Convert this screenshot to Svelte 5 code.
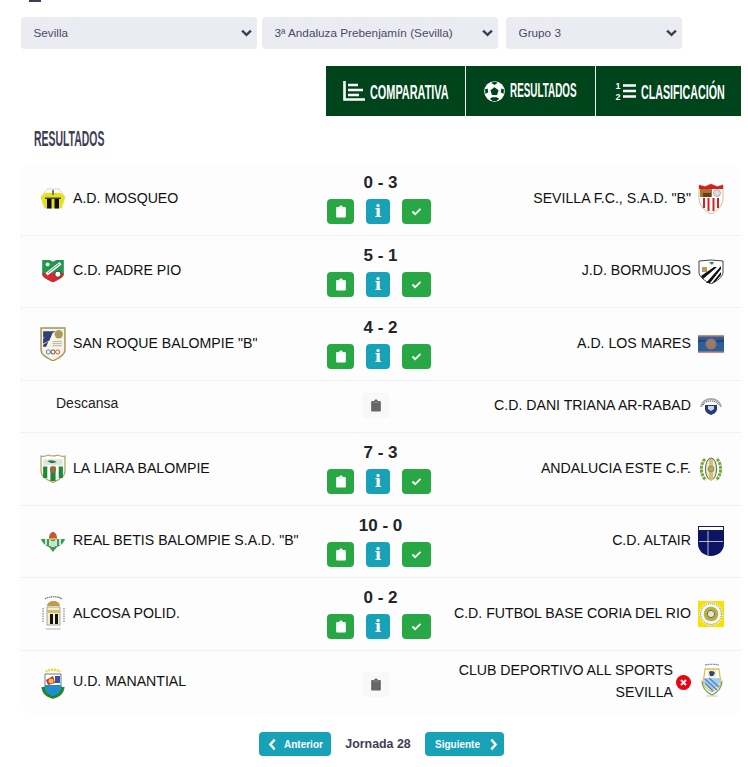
<script>
  const matches = [
    { home: 'A.D. MOSQUEO', hc: 'mosqueo', score: '0 - 3', away: 'SEVILLA F.C., S.A.D. "B"', ac: 'sevilla' },
    { home: 'C.D. PADRE PIO', hc: 'padre', score: '5 - 1', away: 'J.D. BORMUJOS', ac: 'bormujos' },
    { home: 'SAN ROQUE BALOMPIE "B"', hc: 'roque', score: '4 - 2', away: 'A.D. LOS MARES', ac: 'mares' },
    { rest: true, score: '', away: 'C.D. DANI TRIANA AR-RABAD', ac: 'triana' },
    { home: 'LA LIARA BALOMPIE', hc: 'liara', score: '7 - 3', away: 'ANDALUCIA ESTE C.F.', ac: 'andalucia' },
    { home: 'REAL BETIS BALOMPIE S.A.D. "B"', hc: 'betis', score: '10 - 0', away: 'C.D. ALTAIR', ac: 'altair' },
    { home: 'ALCOSA POLID.', hc: 'alcosa', score: '0 - 2', away: 'C.D. FUTBOL BASE CORIA DEL RIO', ac: 'coria' },
    { home: 'U.D. MANANTIAL', hc: 'manantial', score: '', away: 'CLUB DEPORTIVO ALL SPORTS SEVILLA', ac: 'allsports', last: true, withdrawn: true }
  ];
</script>

{#snippet clip(color)}
  <svg class="clip" viewBox="0 0 12 15" aria-hidden="true">
    <path fill={color} d="M1.500 2.200h2.200C3.900 1 4.900.2 6 .2S8.100 1 8.300 2.200h2.200c.8 0 1.300.6 1.300 1.300v9.900c0 .8-.6 1.400-1.300 1.400h-9c-.8 0-1.300-.6-1.300-1.400V3.500c0-.7.5-1.300 1.300-1.300z"/>
    <rect x="3" y="3" width="6" height="1" fill={color === '#fff' ? '#d8f0de' : '#999'}/>
  </svg>
{/snippet}

{#snippet chevron()}
  <svg class="chev" viewBox="0 0 12 8" aria-hidden="true"><path d="M1.200 1.500 6 6l4.800-4.500" fill="none" stroke="#3f3d56" stroke-width="2.600"/></svg>
{/snippet}

{#snippet crest(k)}
  {#if k === 'mosqueo'}
    <svg class="crest" viewBox="0 0 26 21"><path d="M7 1h12l6 8-3.500 11h-17L1 9z" fill="#fff" stroke="#bbb" stroke-width=".6"/><path d="M1 9 5 5h16l4 4-3.500 11h-17z" fill="#e6e313"/><path d="M7 11h4.500v9.500H7zM14.500 11H19v9.500h-4.500z" fill="#0b0b0b"/><path d="M5 9.500h16v1.500H5z" fill="#444"/><path d="M12 2h2v5h-2z" fill="#8a7a4a"/></svg>
  {:else if k === 'sevilla'}
    <svg class="crest" viewBox="0 0 26 31"><path d="M1 2 7 3.500 13 1l6 2.500L25 2v13c0 7-5 13-12 16C6 28 1 22 1 15z" fill="#fff" stroke="#b9923f" stroke-width=".6"/><path d="M1 2 7 3.500 13 1l6 2.500L25 2v4H1z" fill="#d4201f"/><path d="M2 6h12v8H2z" fill="#a9733a"/><path d="M5 10h8v4H5z" fill="#6b3b1c"/><circle cx="19" cy="10" r="3.500" fill="#ddd" stroke="#888" stroke-width=".6"/><path d="M5 15h2v10H5zM9.500 15h2v13h-2zM14.500 15h2v13h-2zM19 15h2v10h-2z" fill="#d4201f"/></svg>
  {:else if k === 'padre'}
    <svg class="crest" viewBox="0 0 24 22"><path d="M2 1h7l3 1.500L15 1h7v13c0 3-5 5-10 7.500C7 19 2 17 2 14z" fill="#1f9a4a"/><path d="M2 13c0 4 5 6 10 8.500 5-2.500 10-4.500 10-8.500z" fill="#dd2232"/><path d="m6 14 13-10" stroke="#fff" stroke-width="3"/><path d="m7 13 11-8.500" stroke="#555" stroke-width=".7"/><circle cx="16.500" cy="14" r="2.800" fill="#fff" stroke="#222" stroke-width=".7"/><circle cx="7" cy="5" r="1.800" fill="#fff"/></svg>
  {:else if k === 'bormujos'}
    <svg class="crest" viewBox="0 0 26 25"><path d="M1 2c4 0 8-1 12-1s8 1 12 1v11c0 5-6 9-12 12C7 22 1 18 1 13z" fill="#fff" stroke="#444" stroke-width="1"/><path d="m8 24 15-17v3L12 24zM14 24l9-11v3l-6 7zM3 17 16 8l3 0L5 20z" fill="#111"/><path d="M11 3h5l-2 3z" fill="#2a8a3a"/><rect x="4" y="8" width="5" height="5" fill="#b99a5a"/></svg>
  {:else if k === 'roque'}
    <svg class="crest" viewBox="0 0 25 33"><path d="M1 1h23v21c0 5-6 8-11.500 10.500C7 30 1 27 1 22z" fill="#f7f4e4" stroke="#a39358" stroke-width="1.400"/><path d="M3 4h12L5 10H3zM3 11l9-5-3 7-6 3zM3 17l5-3-2 5H3z" fill="#2e3f75"/><circle cx="18" cy="7" r="4" fill="#a89a5d"/><path d="M12 14h9M12 16h9M12 18h9" stroke="#999" stroke-width=".7"/><g fill="none" stroke-width=".8"><circle cx="8" cy="24" r="2" stroke="#36c"/><circle cx="12.500" cy="24" r="2" stroke="#333"/><circle cx="17" cy="24" r="2" stroke="#d33"/></g></svg>
  {:else if k === 'mares'}
    <svg class="crest" viewBox="0 0 26 18"><rect width="26" height="18" fill="#2f5f96"/><rect width="26" height="1.500" fill="#d98a70"/><rect y="16.500" width="26" height="1.500" fill="#d98a70"/><path d="M0 5c6-2 10 2 26-1v3C14 9 8 5 0 8z" fill="#234a78"/><circle cx="13" cy="9" r="5.500" fill="#8a7a7a"/><circle cx="13" cy="9" r="2.800" fill="#a97c4d"/></svg>
  {:else if k === 'triana'}
    <svg class="crest" viewBox="0 0 26 17"><path d="M3 9C4 4 8 1 13 1s9 3 10 8" fill="none" stroke="#aaa" stroke-width="2"/><path d="M5 7C7 4 10 3 13 3s6 1 8 4" fill="none" stroke="#333" stroke-width="1" stroke-dasharray="1 1"/><path d="M7 7h12v4c0 3-3 5-6 6-3-1-6-3-6-6z" fill="#273a78"/><path d="M10 8h6v3l-3 2-3-2z" fill="#cfd5e8"/></svg>
  {:else if k === 'liara'}
    <svg class="crest" viewBox="0 0 25 28"><path d="M1 2c3 1 5 0 7-1 2 1 6 1 9 0 2 1 4 2 7 1v15c0 5-6 8-11.500 10.500C7 25 1 22 1 17z" fill="#fff" stroke="#b6a468" stroke-width="1.200"/><path d="M3 5h19v6H3z" fill="#dde8dc"/><path d="M7 7c3-2 7-1 9 1l-5 1z" fill="#2a7b3c"/><path d="M3 12h4v11H3zM10 12h5v14h-5zM18 12h4v11h-4z" fill="#1b8a35"/><circle cx="12.500" cy="15" r="3" fill="#9c6a35"/></svg>
  {:else if k === 'andalucia'}
    <svg class="crest" viewBox="0 0 26 26"><path d="M7 3C2 8 2 19 8 24M19 3c5 5 5 16-1 21" fill="none" stroke="#7aa43d" stroke-width="3" stroke-dasharray="3 .8"/><ellipse cx="13" cy="13" rx="5.500" ry="11" fill="#f0e9cf" stroke="#2e7d3c"/><path d="M11 3h4v21h-4z" fill="#d9bd7c"/><circle cx="13" cy="13" r="3" fill="#b8a76a" stroke="#6d6540" stroke-width=".5"/></svg>
  {:else if k === 'betis'}
    <svg class="crest" viewBox="0 0 26 21"><path d="M1 8h24c-1 4-5 7-8 8l-4 5-4-5C6 15 2 12 1 8z" fill="#3f9a59"/><path d="M6 8v6M10 8v7M16 8v7M20 8v6" stroke="#fff" stroke-width="1.500"/><path d="M9 8c0-5 2-7 4-7s4 2 4 7z" fill="#c9553a"/><path d="M9.500 7h7v2h-7z" fill="#d9b44c"/><rect x="11" y="10" width="4" height="6" fill="#bfe3c9"/></svg>
  {:else if k === 'altair'}
    <svg class="crest" viewBox="0 0 26 30"><rect x=".5" y=".5" width="25" height="4" fill="#fff" stroke="#111a5c"/><path d="M0 5h26v13c0 7-6 12-13 12S0 25 0 18z" fill="#0d1464"/><path d="M1 15.500h24M10 5v24" stroke="#fff" stroke-width=".7"/></svg>
  {:else if k === 'alcosa'}
    <svg class="crest" viewBox="0 0 26 37"><g transform="translate(2)"><path d="M3 4c4-3 13-3 17 0" fill="none" stroke="#666" stroke-width="1.200" stroke-dasharray="1.500 .6"/><path d="M5 11c0-3 3-5 6.500-5S18 8 18 11z" fill="#c49a4a"/><rect x="5" y="12" width="13" height="18" fill="#f3eecc" stroke="#777" stroke-width=".6"/><path d="M8 19h3v10H8zM13 19h3v10h-3z" fill="#141414"/><path d="M5 15h13v3H5z" fill="#d3bc6d"/><path d="M1 13v14M22 13v14" stroke="#888" stroke-width="1.200" stroke-dasharray="1.500 1"/><path d="M4 34h15" stroke="#999" stroke-width="1" stroke-dasharray="1.500 .6"/></g></svg>
  {:else if k === 'coria'}
    <svg class="crest" viewBox="0 0 25 25"><rect width="25" height="25" fill="#f4e400"/><circle cx="12.500" cy="12.500" r="11" fill="#f7f7f2"/><circle cx="12.500" cy="12.500" r="10" fill="none" stroke="#555" stroke-width=".8" stroke-dasharray="1 1"/><circle cx="12.500" cy="12.500" r="7" fill="#b5b13f"/><circle cx="12.500" cy="12.500" r="3.500" fill="#e8e6c7" stroke="#555" stroke-width=".8"/></svg>
  {:else if k === 'manantial'}
    <svg class="crest" viewBox="0 0 26 33"><path d="M3 21c1 6 5 9 10 10 5-1 9-4 10-10" fill="none" stroke="#1a8a2c" stroke-width="3.500"/><path d="M6 6c2-3 12-3 14 0" fill="none" stroke="#ecd93b" stroke-width="2.500" stroke-dasharray="2 .8"/><path d="M5 8h16v14c0 3-4 6-8 8-4-2-8-5-8-8z" fill="#fff" stroke="#345" stroke-width=".7"/><path d="M13 19h8v3c0 3-4 6-8 8z" fill="#1b8fd0"/><path d="M5 19h8v11c-4-2-8-5-8-8z" fill="#1b8fd0"/><path d="M6 14l7-4 2 7-7 2z" fill="#d8232a"/><circle cx="11" cy="15" r="2.500" fill="#e8c23a"/><rect x="15" y="10" width="5" height="7" fill="#3554a5"/></svg>
  {:else if k === 'allsports'}
    <svg class="crest" viewBox="0 0 26 35"><g transform="translate(2)"><path d="M5 2c4-1 10-1 14 0" fill="none" stroke="#7d8da0" stroke-width="1.200" stroke-dasharray="2 .6"/><path d="M5 6h14l1 8c0 0 1 2 1 4 0 6-5 9-9 11-4-2-9-5-9-11 0-2 1-4 1-4z" fill="#fff" stroke="#e2c14f" stroke-width="1.300"/><path d="M8 7h8v7H8z" fill="#e8e8e8"/><path d="M9 9c2-2 5-1 6 1l-2 3h-3z" fill="#3a4650"/><path d="M3.500 15h17c.5 6-4 10-8.500 13-4.500-3-9-7-8.500-13z" fill="#a9cdec"/><path d="m5 16 12 11M9 15l10 9M5 20l8 8" stroke="#4f86bf" stroke-width="1.300"/><path d="M2 18c0 7 4 11 10 14 6-3 10-7 10-14" fill="none" stroke="#6b9b6b" stroke-width="1.200"/><path d="M6 33h12" stroke="#bbb" stroke-width=".8"/></g></svg>
  {/if}
{/snippet}

<div class="cut"></div>

<div class="filters">
  <div class="sel s1"><select aria-label="Provincia"><option>Sevilla</option></select>{@render chevron()}</div>
  <div class="sel s2"><select aria-label="Competición"><option>3ª Andaluza Prebenjamín (Sevilla)</option></select>{@render chevron()}</div>
  <div class="sel s3"><select aria-label="Grupo"><option>Grupo 3</option></select>{@render chevron()}</div>
</div>

<nav class="tabs">
  <a class="tab t1" href="#c">
    <svg class="ticon" viewBox="0 0 22 20"><path d="M1.500 0v18.500H22" fill="none" stroke="#fff" stroke-width="2.600"/><path d="M5 4h10M5 9h15M5 14h11" stroke="#fff" stroke-width="2.600"/></svg>
    <span class="tall c1">COMPARATIVA</span>
  </a>
  <a class="tab t2" href="#r">
    <svg class="ticon ball" viewBox="0 0 22 22"><circle cx="11" cy="11" r="10.800" fill="#fff"/><path d="m11 6.500 4.300 3.100-1.600 5h-5.400l-1.600-5zM11 .8l3.500 1-3.500 2.300-3.500-2.300zM21 9l-.6 4.500-2.900-1.800.7-3.900zM1 9l.6 4.500 2.900-1.800-.7-3.900zM6 18.600l2.800-1.500 4.400 0 2.800 1.500L13 21h-4z" fill="#00441b"/></svg>
    <span class="tall c2">RESULTADOS</span>
  </a>
  <a class="tab t3" href="#t">
    <span class="nums"><b>1</b><b>2</b></span>
    <svg class="tlines" viewBox="0 0 14 16"><path d="M0 2h14M0 8h14M0 14h14" stroke="#fff" stroke-width="2.600"/></svg>
    <span class="tall c3">CLASIFICACIÓN</span>
  </a>
</nav>

<h2 class="title"><span class="tall c4">RESULTADOS</span></h2>

<section class="card">
  {#each matches as m}
    <div class="row" class:rest={m.rest} class:last={m.last}>
      {#if m.rest}
        <div class="team home descansa">Descansa</div>
      {:else}
        <div class="team home"><span class="cw">{@render crest(m.hc)}</span><span>{m.home}</span></div>
      {/if}
      <div class="mid">
        {#if m.score}
          <div class="score">{m.score}</div>
          <div class="btns">
            <span class="btn green b1">{@render clip('#fff')}</span>
            <span class="btn teal b2">i</span>
            <span class="btn green b3"><svg viewBox="0 0 12 10" class="chk"><path d="M1.500 5 4.500 8l6-6" fill="none" stroke="#fff" stroke-width="2"/></svg></span>
          </div>
        {:else}
          <span class="btn grey">{@render clip('#666')}</span>
        {/if}
      </div>
      <div class="team away">
        <span class="aname">{m.away}</span>
        {#if m.withdrawn}
          <svg class="xx" viewBox="0 0 15 15"><circle cx="7.500" cy="7.500" r="7.500" fill="#f00010"/><path d="m5 5 5 5m0-5-5 5" stroke="#fff" stroke-width="2"/></svg>
        {/if}
        <span class="cw" class:up={m.withdrawn}>{@render crest(m.ac)}</span>
      </div>
    </div>
  {/each}
</section>

<div class="pager">
  <a class="pg prev" href="#p"><svg viewBox="0 0 8 12"><path d="M6 1.500 2 6l4 4.500" fill="none" stroke="#fff" stroke-width="2.200"/></svg>Anterior</a>
  <span class="jor">Jornada 28</span>
  <a class="pg next" href="#n">Siguiente<svg viewBox="0 0 8 12"><path d="m2 1.500 4 4.500-4 4.500" fill="none" stroke="#fff" stroke-width="2.200"/></svg></a>
</div>

<style>
  :global(body) { background: #fff; font-family: "Liberation Sans", Arial, sans-serif; color: #111; }
  .cut { width: 12px; height: 2px; margin-left: 29px; background: #3f3d56; }

  .filters { display: flex; margin: 15px 0 0 21px; height: 32px; }
  .sel { position: relative; height: 32px; }
  .s1, .s2 { width: 236px; }
  .s2 { margin-left: 5px; }
  .s3 { width: 176px; margin-left: 8px; }
  select {
    appearance: none; width: 100%; height: 100%; border: 0; border-radius: 4px;
    background: #ebecf2; color: #4a4a63; font: 11.750px "Liberation Sans", Arial, sans-serif;
    padding: 0 0 2px 12.500px;
  }
  .chev { position: absolute; right: 5px; top: 12px; width: 11px; height: 8px; pointer-events: none; }

  .tabs { display: flex; margin: 17px 0 0 326px; width: 415px; height: 50px; background: #00441b; }
  .tab { display: flex; align-items: center; color: #fff; text-decoration: none; height: 100%; box-sizing: border-box; }
  .t1 { width: 140px; padding-left: 17px; border-right: 1px solid #fff; }
  .t2 { width: 130px; padding-left: 18px; border-right: 1px solid #fff; }
  .t3 { width: 145px; padding-left: 18px; }
  .ticon { width: 22px; height: 20px; flex: none; margin-right: 5px; }
  .ball { width: 21px; height: 21px; margin-right: 5px; }
  .nums { display: flex; flex-direction: column; gap: 1px; width: 8px; margin-right: 1px; color: #fff; }
  .nums b { font: bold 9px/10px "Liberation Sans", sans-serif; text-align: center; }
  .tlines { width: 13px; height: 16px; margin-right: 5px; }

  .tall {
    display: block; white-space: nowrap; font-weight: bold; line-height: 12px;
    transform-origin: center;
    font-family: "Liberation Sans", sans-serif;
  }
  .c1 { font-size: 10.900px; transform: scaleY(1.920); }
  .c2 { font-size: 9.900px; transform: scaleY(2.120); }
  .c3 { font-size: 10.700px; transform: scaleY(1.960); }
  .c4 { font-size: 10.450px; line-height: 21px; transform: scaleY(2.140); color: #3f3d56; }

  .title { margin: 12px 0 0 34px; height: 35px; font-weight: normal; font-size: inherit; }

  .card { margin-left: 21px; width: 720px; background: #fdfdfd; border-radius: 12px; overflow: hidden; }
  .row {
    display: grid; grid-template-columns: 298px 120px 1fr; align-items: center;
    box-sizing: border-box; height: 72.500px; border-bottom: 1px dotted #e6e6e6;
  }
  .row.rest { height: 52.500px; }
  .row.last { height: 64px; border-bottom: 0; }
  .row.last .team { margin-top: -1px; }
  .team { display: flex; align-items: center; font-size: 14.150px; line-height: 21.600px; min-width: 0; }
  .home { padding-left: 19px; gap: 7px; }
  .away { justify-content: flex-end; text-align: right; padding-right: 17px; gap: 7px; }
  .cw { display: block; width: 26px; flex: none; line-height: 0; }
  .cw.up { margin-top: -4px; }
  .crest { display: block; width: 26px; height: auto; }
  .descansa { padding-left: 35px; margin-top: -5px; font-size: 14px; color: #222; }
  .xx { width: 15px; height: 15px; flex: none; margin-left: -4px; }

  .mid { display: flex; flex-direction: column; align-items: center; margin-top: -2.200px; }
  .score { font-weight: bold; font-size: 17px; line-height: 24px; margin-bottom: 4.300px; padding-left: 3px; color: #212529; }
  .btns { display: flex; gap: 12px; }
  .btn { display: flex; align-items: center; justify-content: center; height: 25px; border-radius: 4px; }
  .green { background: #28a745; }
  .teal { background: #17a2b8; color: #fff; font: bold 17px/25px "DejaVu Serif", serif; }
  .b1 { width: 27px; } .b2 { width: 24px; } .b3 { width: 29px; }
  .clip { width: 10px; height: 13px; }
  .chk { width: 11px; height: 9px; }
  .grey { width: 27px; background: #f8f8f8; margin-right: 7px; }
  .row.last .grey { margin-top: 7px; }

  .pager { display: flex; align-items: center; margin: 17.500px 0 0 259px; height: 24px; }
  .pg {
    display: flex; align-items: center; height: 24px; box-sizing: border-box; border-radius: 4px;
    background: #17a2b8; color: #fff; text-decoration: none; font-weight: bold; font-size: 10px;
  }
  .pg svg { width: 9px; height: 13px; flex: none; }
  .prev { width: 72px; padding-left: 9px; gap: 7px; }
  .next { width: 79px; padding-left: 10px; gap: 9px; }
  .jor { width: 94px; text-align: center; font-weight: bold; font-size: 12.400px; color: #3f3d56; }
</style>
